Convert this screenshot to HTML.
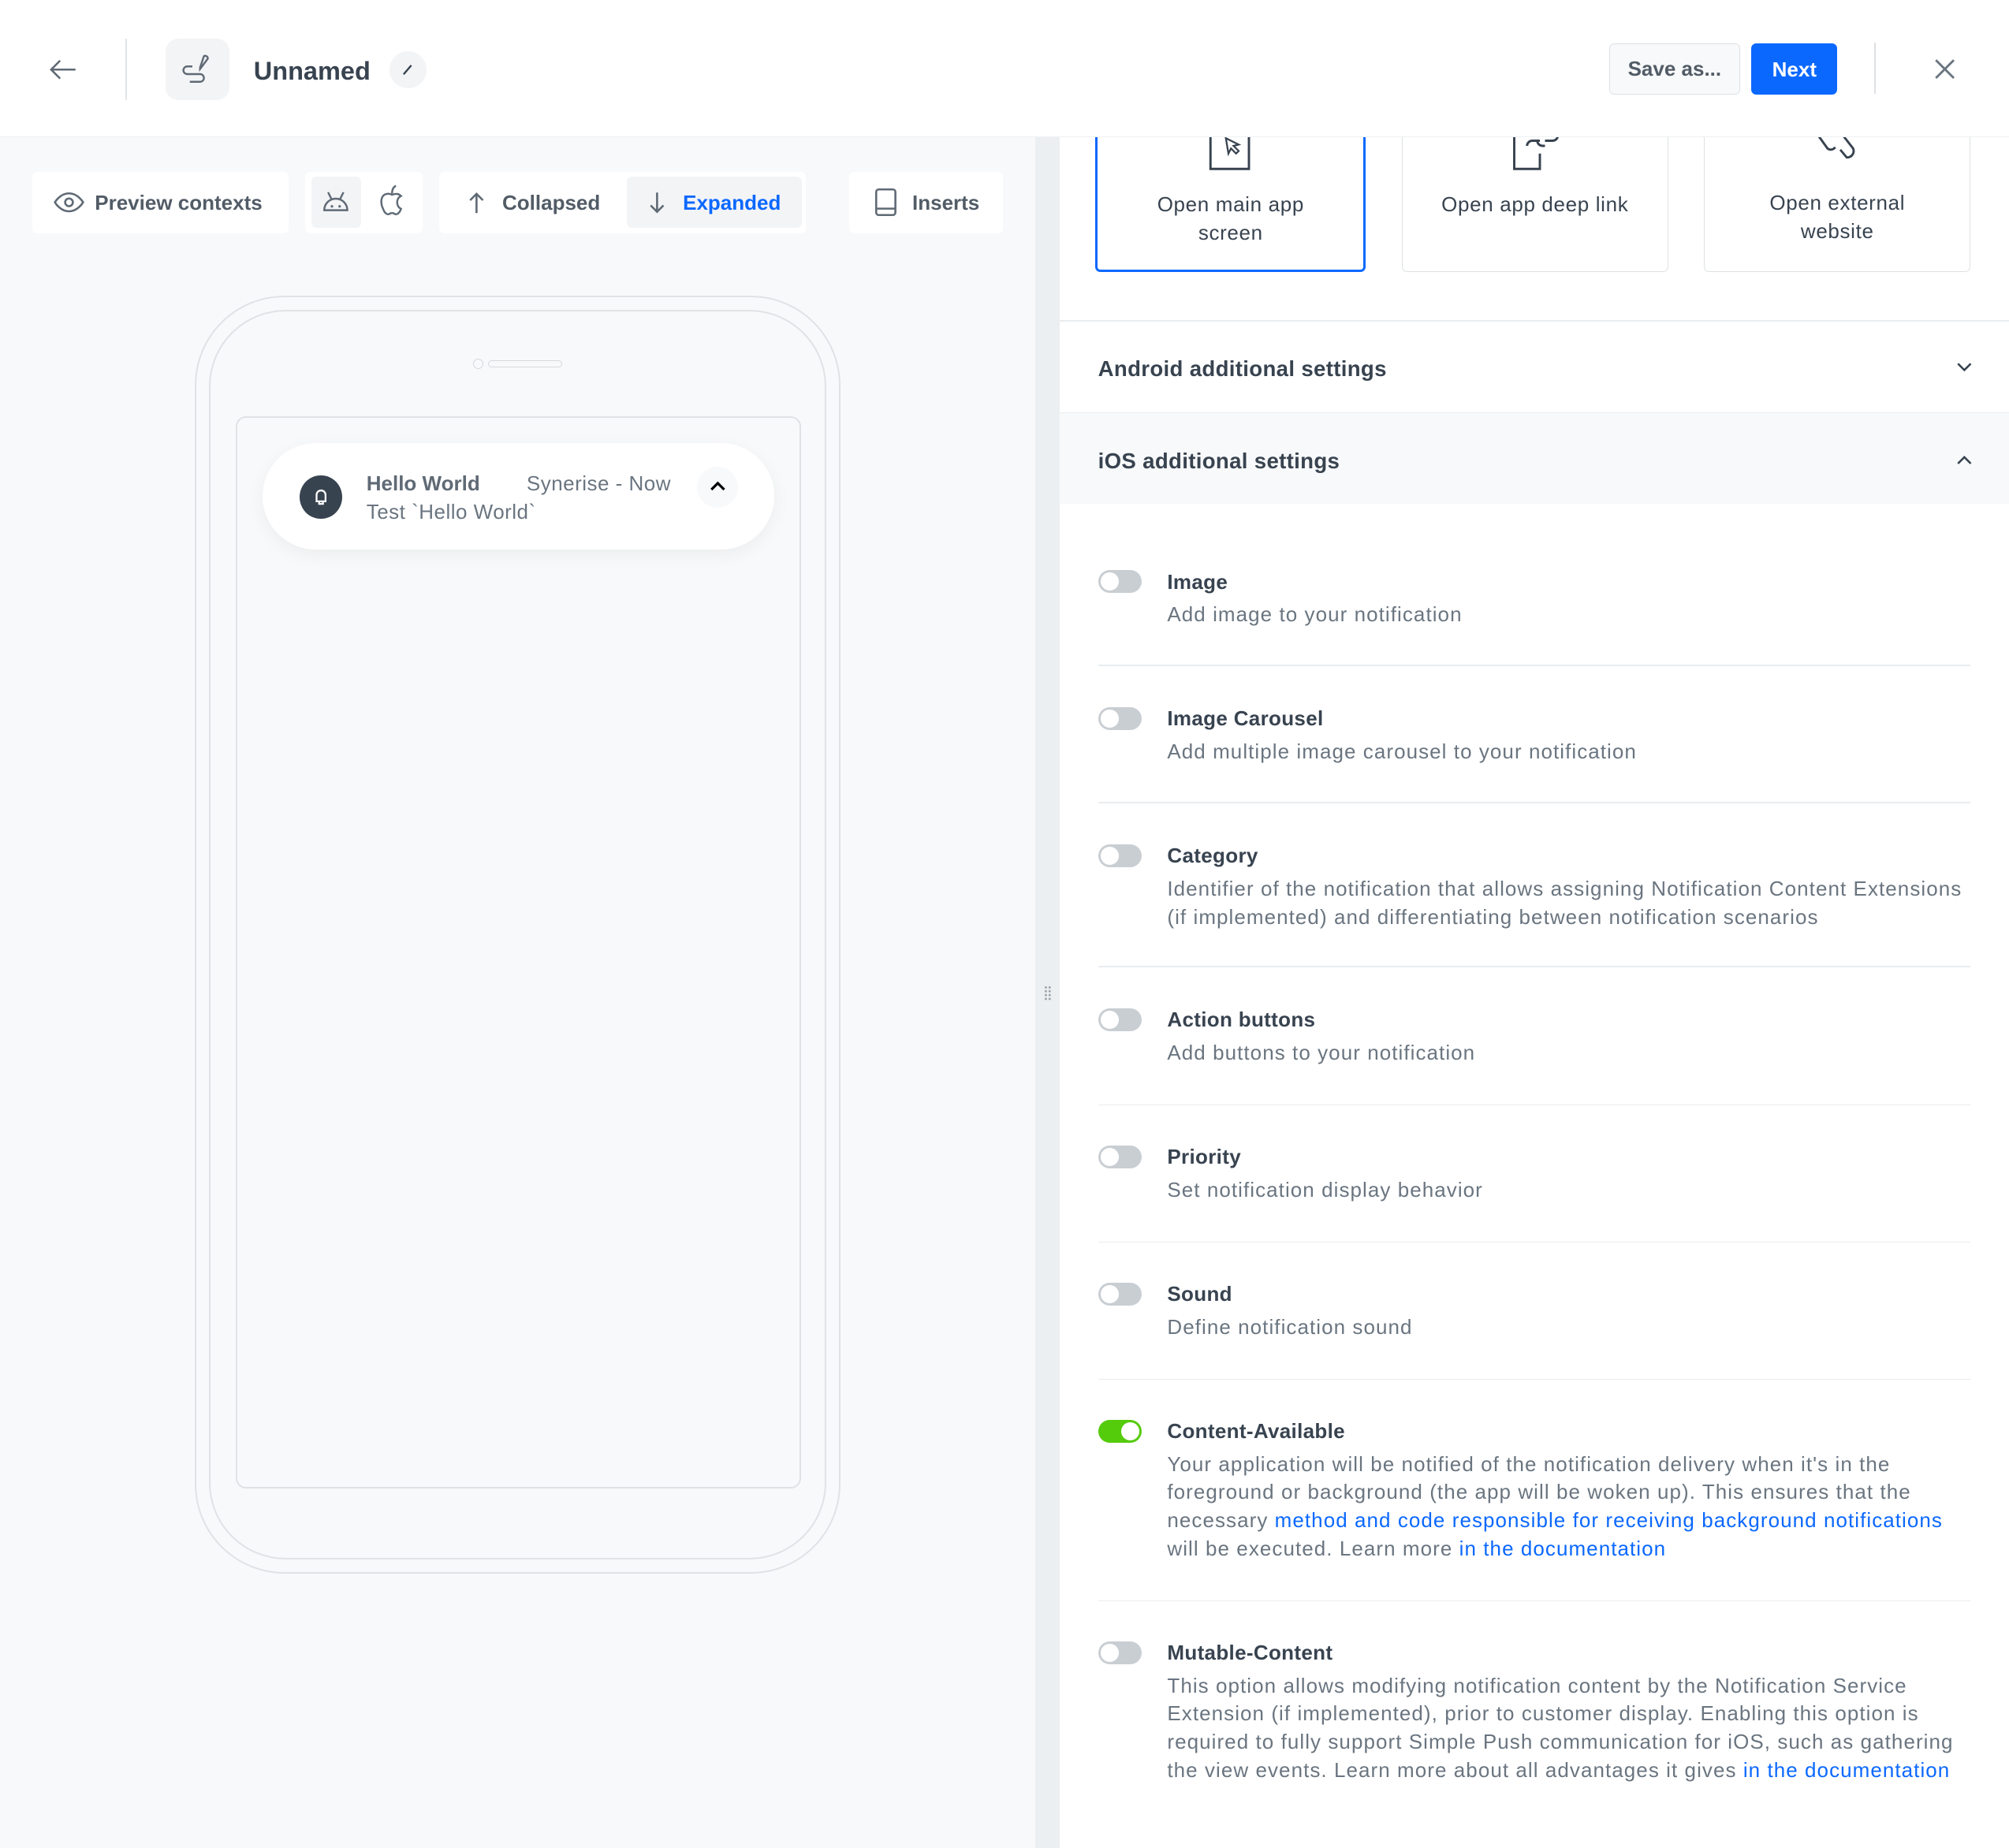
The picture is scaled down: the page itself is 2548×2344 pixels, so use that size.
<!DOCTYPE html>
<html><head><meta charset="utf-8"><style>
*{margin:0;padding:0;box-sizing:border-box}
html,body{width:2548px;height:2344px;overflow:hidden;background:#fff}
#w{zoom:1.625;width:1568px;height:1443px;position:relative;font-family:"Liberation Sans",sans-serif;color:#384350;overflow:hidden}
.a{position:absolute}
.hdr{left:0;top:0;width:1568px;height:107px;background:#fff;border-bottom:1px solid #eef0f2;z-index:5}
.left{left:0;top:107px;width:808px;height:1336px;background:#f8f9fa}
.split{left:808px;top:107px;width:19px;height:1336px;background:#eceff1}
.right{left:827px;top:107px;width:741px;height:1336px;background:#fff}
.box{background:#fff;border-radius:4px;height:48px;top:134px}
.t{font-size:16px;white-space:nowrap}
.card{top:90px;height:122px;border:1px solid #dde1e4;border-radius:4px;background:#fff;text-align:center;font-size:16px;line-height:22px;color:#384350;letter-spacing:0.4px}
.tg{left:857px;width:34px;height:18px;border-radius:9px;background:#c9ced3}
.tg::after{content:"";position:absolute;left:2px;top:2px;width:14px;height:14px;border-radius:50%;background:#fff}
.tg.on{background:#54cb0b}.tg.on::after{left:18px}
.it{left:911px;width:650px}
.it b{display:block;font-size:16px;line-height:20px;font-weight:bold;color:#384350;letter-spacing:0.2px}
.it p{font-size:16px;line-height:22px;color:#6a7580;margin-top:5px;letter-spacing:0.65px;white-space:nowrap}
.it a{color:#0b68ff;text-decoration:none}
.sep{left:857px;width:681px;height:1px;background:#e9ecef}
</style></head><body><div id="w">
<div class="a hdr">
 <svg class="a" style="left:37px;top:44px" width="24" height="20" viewBox="0 0 24 20"><path d="M22 10H3M10 3L3 10l7 7" fill="none" stroke="#5f6a75" stroke-width="1.6"/></svg>
 <div class="a" style="left:98px;top:30px;width:1px;height:48px;background:#e1e4e7"></div>
 <div class="a" style="left:129px;top:30px;width:50px;height:48px;border-radius:10px;background:#f3f4f6"></div>
 <svg class="a" style="left:142px;top:42px" width="24" height="26" viewBox="0 0 24 26"><path d="M8 10H4a3 3 0 0 0 0 6h10a3 3 0 0 1 0 6H6M14 12l6-8a2 2 0 0 0-3-2l-3 9z" fill="none" stroke="#5f6a75" stroke-width="1.5"/></svg>
 <div class="a" style="left:198px;top:44px;font-size:20px;font-weight:bold;color:#384350">Unnamed</div>
 <div class="a" style="left:304px;top:40px;width:29px;height:29px;border-radius:50%;background:#f3f4f6"></div>
 <svg class="a" style="left:312px;top:48px" width="12" height="12"><path d="M3 10l6-7" stroke="#384350" stroke-width="1.5"/></svg>
 <div class="a t" style="left:1256px;top:34px;width:102px;height:40px;border:1px solid #dde1e4;border-radius:4px;background:#f8f9fa;text-align:center;line-height:39px;font-weight:bold;color:#525c67">Save as...</div>
 <div class="a t" style="left:1367px;top:34px;width:67px;height:40px;border-radius:4px;background:#0b68ff;text-align:center;line-height:41px;font-weight:bold;color:#fff">Next</div>
 <div class="a" style="left:1463px;top:33px;width:1px;height:40px;background:#dde1e4"></div>
 <svg class="a" style="left:1509px;top:45px" width="18" height="18"><path d="M2 2l14 14M16 2L2 16" stroke="#6a7580" stroke-width="1.8"/></svg>
</div>
<div class="a left"></div>
<div class="a split"></div>
<div class="a" style="left:815px;top:769px;width:6px;height:12px;background:radial-gradient(circle,#9aa3ab 0.8px,transparent 1px) 0 0/3px 3px"></div>
<div class="a right"></div>
<!-- toolbar -->
<div class="a box" style="left:25px;width:200px"></div>
<svg class="a" style="left:42px;top:149px" width="24" height="18" viewBox="0 0 24 18"><path d="M1 9s4-7 11-7 11 7 11 7-4 7-11 7S1 9 1 9z" fill="none" stroke="#5f6a75" stroke-width="1.6"/><circle cx="12" cy="9" r="3" fill="none" stroke="#5f6a75" stroke-width="1.6"/></svg>
<div class="a t" style="left:74px;top:149px;font-weight:bold;color:#525c67">Preview contexts</div>
<div class="a box" style="left:238px;width:92px"></div>
<div class="a" style="left:243px;top:138px;width:39px;height:40px;border-radius:4px;background:#f3f4f6"></div>
<svg class="a" style="left:251px;top:147px" width="22" height="20" viewBox="0 0 22 20"><path d="M2 17a9 9 0 0 1 18 0zM5 3l3 6M17 3l-3 6" fill="none" stroke="#5f6a75" stroke-width="1.5"/><circle cx="8" cy="14" r="1" fill="#5f6a75"/><circle cx="14" cy="14" r="1" fill="#5f6a75"/></svg>
<svg class="a" style="left:296px;top:144px" width="20" height="26" viewBox="0 0 20 26"><path d="M10 8c-2-1-4-1-6 0-3 2-3 7-1 11 1 3 3 5 5 4 1-1 3-1 4 0 2 1 4-1 5-4-2-1-3-3-3-5s1-4 3-5c-2-2-4-2-7-1zM10 7c0-3 1-5 3-6" fill="none" stroke="#5f6a75" stroke-width="1.5"/></svg>
<div class="a box" style="left:343px;width:286px"></div>
<svg class="a" style="left:365px;top:148px" width="14" height="20"><path d="M7 18V3M2 8l5-5 5 5" fill="none" stroke="#5f6a75" stroke-width="1.6"/></svg>
<div class="a t" style="left:392px;top:149px;font-weight:bold;color:#525c67">Collapsed</div>
<div class="a" style="left:489px;top:138px;width:137px;height:40px;border-radius:4px;background:#f3f4f6"></div>
<svg class="a" style="left:506px;top:148px" width="14" height="20"><path d="M7 2v15M2 12l5 5 5-5" fill="none" stroke="#5f6a75" stroke-width="1.6"/></svg>
<div class="a t" style="left:533px;top:149px;font-weight:bold;color:#0b68ff">Expanded</div>
<div class="a box" style="left:663px;width:120px"></div>
<svg class="a" style="left:682px;top:146px" width="20" height="24"><rect x="2" y="2" width="15" height="20" rx="2" fill="none" stroke="#5f6a75" stroke-width="1.6"/><path d="M2 17h15" stroke="#5f6a75" stroke-width="1.6"/></svg>
<div class="a t" style="left:712px;top:149px;font-weight:bold;color:#525c67">Inserts</div>
<!-- phone -->
<div class="a" style="left:152px;top:231px;width:504px;height:997px;border:1.5px solid #dfe3e6;border-radius:70px"></div>
<div class="a" style="left:163px;top:242px;width:482px;height:975px;border:1.5px solid #dfe3e6;border-radius:60px"></div>
<div class="a" style="left:369px;top:280px;width:8px;height:8px;border:1px solid #d5d9dd;border-radius:50%"></div>
<div class="a" style="left:381px;top:281px;width:58px;height:6px;border:1px solid #d5d9dd;border-radius:3px"></div>
<div class="a" style="left:184px;top:325px;width:441px;height:837px;border:1.5px solid #dfe3e6;border-radius:8px;background:#f8f9fa"></div>
<div class="a" style="left:205px;top:346px;width:399px;height:83px;border-radius:42px;background:#fff;box-shadow:0 4px 14px rgba(0,0,0,.05)"></div>
<div class="a" style="left:234px;top:371px;width:33px;height:34px;border-radius:50%;background:#384350"></div>
<svg class="a" style="left:243px;top:380px" width="15" height="16"><path d="M4 11V6a3.5 3.5 0 0 1 7 0v5zM6 11v2h3v-2" fill="none" stroke="#fff" stroke-width="1.4"/></svg>
<div class="a t" style="left:286px;top:368px;font-weight:bold;color:#5f6a75">Hello World</div>
<div class="a t" style="left:411px;top:368px;color:#6a7580;letter-spacing:0.3px">Synerise - Now</div>
<div class="a t" style="left:286px;top:390px;color:#6a7580;letter-spacing:0.3px">Test `Hello World`</div>
<div class="a" style="left:544px;top:364px;width:32px;height:32px;border-radius:50%;background:#f8f9fa"></div>
<svg class="a" style="left:553px;top:374px" width="14" height="10"><path d="M2 8l5-5 5 5" fill="none" stroke="#000" stroke-width="2"/></svg>
<!-- right -->
<div class="a card" style="left:855px;width:211px;border:2px solid #0b68ff;padding-top:57px">Open main app<br>screen</div>
<svg class="a" style="left:943px;top:90px" width="34" height="46"><path d="M2 0v42h30V0" fill="none" stroke="#384350" stroke-width="1.8"/><path d="M14 18l2 12 2-4 4 4 2-2-4-4 4-1z" fill="none" stroke="#384350" stroke-width="1.4"/></svg>
<div class="a card" style="left:1094px;width:208px;padding-top:58px">Open app deep link</div>
<svg class="a" style="left:1178px;top:90px" width="44" height="46"><path d="M4 10v32h20V30" fill="none" stroke="#384350" stroke-width="1.8"/><path d="M14 24a4 4 0 0 1 4-4h6M28 20h6a4 4 0 0 0 0-8h-6M22 20a4 4 0 0 0 4 4h2" fill="none" stroke="#384350" stroke-width="1.8"/></svg>
<div class="a card" style="left:1330px;width:208px;padding-top:57px">Open external<br>website</div>
<svg class="a" style="left:1412px;top:90px" width="50" height="46"><path d="M4 12l10 14a4 4 0 0 0 6-1M20 8l14 18a5 5 0 0 1-5 7l-5-6" fill="none" stroke="#384350" stroke-width="1.8"/></svg>
<div class="a hdr" style="height:107px;top:0;background:transparent;border:none;z-index:4"><div class="a" style="left:827px;top:0;width:741px;height:107px;background:#fff;border-bottom:1px solid #eef0f2"></div></div>
<div class="a" style="left:827px;top:250px;width:741px;height:1px;background:#e9ecef"></div>
<div class="a t" style="left:857px;top:278px;font-weight:bold;color:#384350;font-size:17px;letter-spacing:0.2px">Android additional settings</div>
<svg class="a" style="left:1526px;top:282px" width="14" height="10"><path d="M2 2l5 5 5-5" fill="none" stroke="#384350" stroke-width="1.6"/></svg>
<div class="a" style="left:827px;top:322px;width:741px;height:71px;background:#f8f9fa;border-top:1px solid #e9ecef"></div>
<div class="a t" style="left:857px;top:350px;font-weight:bold;color:#384350;font-size:17px;letter-spacing:0.2px">iOS additional settings</div>
<svg class="a" style="left:1526px;top:354px" width="14" height="10"><path d="M2 8l5-5 5 5" fill="none" stroke="#384350" stroke-width="1.6"/></svg>

<div class="a tg" style="top:445px"></div>
<div class="a it" style="top:444px"><b>Image</b><p>Add image to your notification</p></div>
<div class="a sep" style="top:519px"></div>
<div class="a tg" style="top:552px"></div>
<div class="a it" style="top:551px"><b>Image Carousel</b><p>Add multiple image carousel to your notification</p></div>
<div class="a sep" style="top:626px"></div>
<div class="a tg" style="top:659px"></div>
<div class="a it" style="top:658px"><b>Category</b><p>Identifier of the notification that allows assigning Notification Content Extensions<br>(if implemented) and differentiating between notification scenarios</p></div>
<div class="a sep" style="top:754px"></div>
<div class="a tg" style="top:787px"></div>
<div class="a it" style="top:786px"><b>Action buttons</b><p>Add buttons to your notification</p></div>
<div class="a sep" style="top:862px"></div>
<div class="a tg" style="top:894px"></div>
<div class="a it" style="top:893px"><b>Priority</b><p>Set notification display behavior</p></div>
<div class="a sep" style="top:969px"></div>
<div class="a tg" style="top:1001px"></div>
<div class="a it" style="top:1000px"><b>Sound</b><p>Define notification sound</p></div>
<div class="a sep" style="top:1076px"></div>
<div class="a tg on" style="top:1108px"></div>
<div class="a it" style="top:1107px"><b>Content-Available</b><p>Your application will be notified of the notification delivery when it's in the<br>foreground or background (the app will be woken up). This ensures that the<br>necessary <a>method and code responsible for receiving background notifications</a><br>will be executed. Learn more <a>in the documentation</a></p></div>
<div class="a sep" style="top:1249px"></div>
<div class="a tg" style="top:1281px"></div>
<div class="a it" style="top:1280px"><b>Mutable-Content</b><p>This option allows modifying notification content by the Notification Service<br>Extension (if implemented), prior to customer display. Enabling this option is<br>required to fully support Simple Push communication for iOS, such as gathering<br>the view events. Learn more about all advantages it gives <a>in the documentation</a></p></div>
</div></body></html>
